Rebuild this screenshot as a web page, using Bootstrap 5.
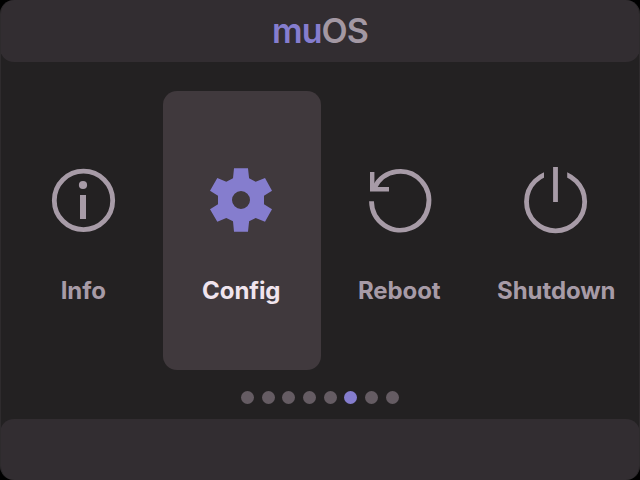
<!DOCTYPE html>
<html lang="en">
<head>
<meta charset="utf-8">
<meta name="viewport" content="width=device-width, initial-scale=1">
<title>muOS</title>
<link href="https://cdn.jsdelivr.net/npm/bootstrap@5.3.0/dist/css/bootstrap.min.css" rel="stylesheet">
<style>
  html, body { background: #000; }
  body { font-family: Inter, "Open Sans", sans-serif; color: #a79ba7; }
  .screen { width: 640px; height: 480px; background: #232122; border-radius: 14px; border: 1px solid #2e2b2d; border-width: 0 1px; }
  .bar { background: #322d31; margin: 0 -1px; }
  .bar-top { height: 62px; border-radius: 14px; }
  .bar-bottom { height: 61px; border-radius: 14px; }
  .brand { font-size: 34px; line-height: 62px; font-weight: 600; letter-spacing: -.9px; color: #a398a3; }
  .accent { color: #857dce; }
  .launcher { height: 279px; margin: 29px 4px 0; display: grid; grid-template-columns: 158px 158px 158px 156px; }
  .tile { border-radius: 14px; padding-top: 69px; color: #a79ba7; }
  .tile.active { background: #40393d; color: #f0e4ee; }
  .tile svg { width: 80px; height: 80px; flex: none; }
  .tile .label { font-size: 24px; line-height: 30px; font-weight: 650; margin-top: 36px; padding-right: 1.5px; white-space: nowrap; letter-spacing: -.08px; }
  .pager { margin-top: 21px; height: 13px; gap: 7.7px; padding-left: 240px; }
  .dot { width: 13px; height: 13px; border-radius: 50%; background: #655c63; }
  .dot.current { background: #857dce; }
</style>
<script src="https://cdn.jsdelivr.net/npm/bootstrap@5.3.0/dist/js/bootstrap.bundle.min.js"></script>
</head>
<body class="m-0 overflow-hidden">
<div class="screen d-flex flex-column overflow-hidden">
  <header class="bar bar-top text-center"><h1 class="brand m-0"><span class="accent">mu</span>OS</h1></header>
  <main class="launcher">
    <div class="tile d-flex flex-column align-items-center">
      <svg viewBox="44 160 80 80" fill="none" stroke="currentColor"><circle cx="83.5" cy="200.4" r="29.2" stroke-width="4.8"/><circle cx="83" cy="185" r="4.1" fill="currentColor" stroke="none"/><path d="M83 195V219" stroke-width="6"/></svg>
      <div class="label">Info</div>
    </div>
    <div class="tile active d-flex flex-column align-items-center">
      <svg class="accent" viewBox="202 160 80 80" fill="currentColor" fill-rule="evenodd"><path d="M234 168.2H248L249.1 178.3L255.7 181.8L265 178L272 190.7L264 195.7V204.3L272 209.3L265 221.7L255.7 218L249.1 221.3L248 231.8H234L233 221.3L226.3 218L217.3 221.7L210 209.3L218 204.3V195.7L210 190.7L217.3 178L226.3 181.8L233 178.3ZM250 200A9 9 0 1 0 232 200A9 9 0 1 0 250 200Z"/></svg>
      <div class="label">Config</div>
    </div>
    <div class="tile d-flex flex-column align-items-center">
      <svg viewBox="360 160 80 80" fill="none" stroke="currentColor" stroke-width="4.8"><path d="M371.5 201.3A28.7 29.4 0 1 0 374.6 187.5"/><path d="M372.2 172V189.2H389" stroke-width="4.4"/></svg>
      <div class="label">Reboot</div>
    </div>
    <div class="tile d-flex flex-column align-items-center">
      <svg viewBox="517 160 80 80" fill="none" stroke="currentColor" stroke-width="4.8">
        <clipPath id="power-gap"><path d="M517 160H544V190H567.2V160H597V240H517Z"/></clipPath>
        <circle cx="555.6" cy="201.7" r="29.1" clip-path="url(#power-gap)"/><path d="M555.5 167V202"/></svg>
      <div class="label">Shutdown</div>
    </div>
  </main>
  <div class="pager d-flex">
    <span class="dot"></span><span class="dot"></span><span class="dot"></span><span class="dot"></span><span class="dot"></span><span class="dot current"></span><span class="dot"></span><span class="dot"></span>
  </div>
  <footer class="bar bar-bottom mt-auto"></footer>
</div>
</body>
</html>
